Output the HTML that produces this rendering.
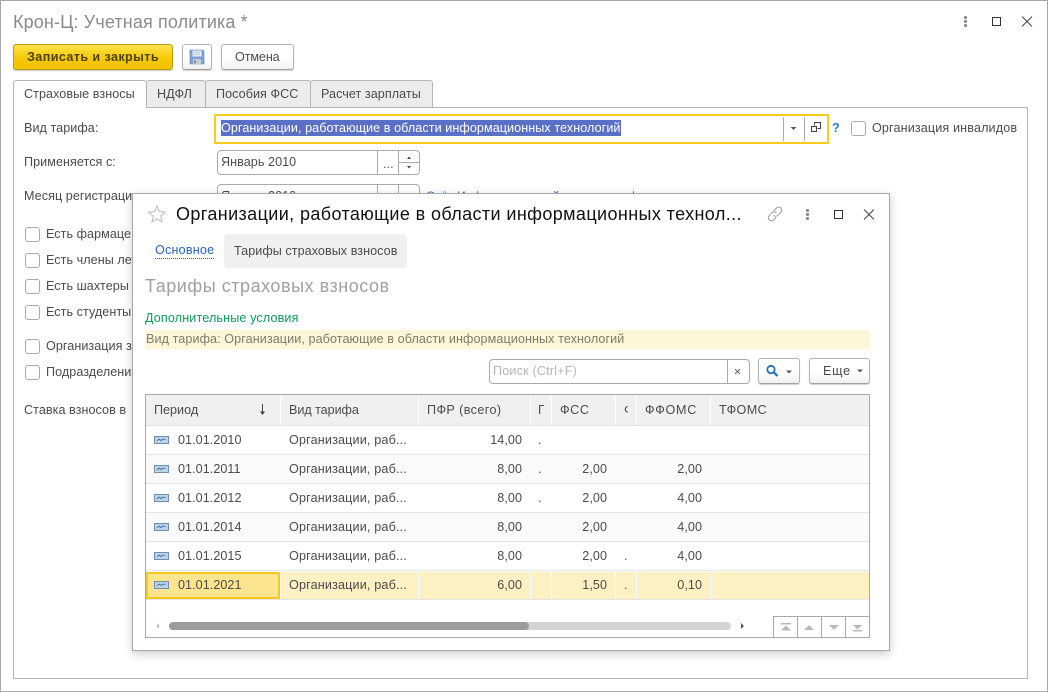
<!DOCTYPE html>
<html lang="ru"><head><meta charset="utf-8"><title>Крон-Ц: Учетная политика</title>
<style>
html,body{margin:0;padding:0;background:#fff}
#p{position:relative;width:1048px;height:692px;overflow:hidden;background:#fff;font:12.6px/16px "Liberation Sans",Arial,sans-serif;color:#4b4b4b}
#p div,#p span.t,#p svg{position:absolute;box-sizing:border-box}
.t{white-space:nowrap;letter-spacing:.05px}
.t.o{letter-spacing:.16px}
.cb{width:15px;height:15px;border:1px solid #a9a9a9;border-radius:3px;background:#fff}
.tab{top:80px;height:27px;background:#ececec;border:1px solid #b5b5b5;border-bottom:none;border-radius:3px 3px 0 0}
.btn{border:1px solid #b4b4b4;border-bottom-color:#a0a0a0;border-radius:3px;background:linear-gradient(#fff 55%,#f0f0f0);box-shadow:0 1px 1px #d0d0d0}
.h{top:395px;height:30px;background:#f0f0f0}
.sep{left:146px;width:723px;height:1px;background:#e4e4e4}
.r{text-align:right}
</style></head><body><div id="p">
<div style="left:0;top:0;width:1048px;height:692px;border:1px solid #a8a8a8"></div>
<span class="t" style="left:13px;top:11px;font-size:18px;line-height:22px;color:#8a8a8a;letter-spacing:.13px">Крон-Ц: Учетная политика *</span>
<svg style="left:960px;top:14px" width="74" height="16" viewBox="0 0 74 16"><g fill="#8a8a8a"><rect x="4" y="2" width="3" height="3" rx="1"/><rect x="4" y="6" width="3" height="3" rx="1"/><rect x="4" y="10" width="3" height="3" rx="1"/></g><rect x="32.500" y="3.500" width="8" height="8" fill="none" stroke="#333"/><path d="M62 2.500l10 10M72 2.500l-10 10" stroke="#444" fill="none"/></svg>

<div style="left:13px;top:44px;width:160px;height:26px;border:1px solid #b99c10;border-radius:3px;background:linear-gradient(#fde24a,#f6c800 60%,#f2c200);box-shadow:0 1px 1px #ccc"></div>
<span class="t" style="left:27px;top:49px;font-weight:bold;color:#4d4300;letter-spacing:.4px">Записать и закрыть</span>
<div class="btn" style="left:182px;top:44px;width:30px;height:26px"></div>
<svg style="left:189px;top:49px" width="16" height="16" viewBox="0 0 16 16"><path d="M1 1h12.500l1.500 1.500V15H1z" fill="#7aa3d6" stroke="#5f86b8" stroke-width=".6"/><rect x="3.500" y="1.500" width="9" height="6" fill="#e6eef8"/><path d="M5 3.500h6M5 5.500h6" stroke="#a9bdd3" stroke-width=".8"/><rect x="4" y="10" width="8" height="5" fill="#c9ced4"/><rect x="5" y="11" width="2" height="3.500" fill="#8a93a0"/></svg>
<div class="btn" style="left:221px;top:44px;width:73px;height:26px"></div>
<span class="t" style="left:235px;top:49px;letter-spacing:-.1px">Отмена</span>

<div style="left:13px;top:107px;width:1015px;height:572px;border:1px solid #b5b5b5"></div>
<div class="tab" style="left:13px;width:134px;height:28px;background:#fff;z-index:1"></div>
<span class="t" style="left:24px;top:86px;z-index:2">Страховые взносы</span>
<div class="tab" style="left:146px;width:60px"></div><span class="t" style="left:157px;top:86px">НДФЛ</span>
<div class="tab" style="left:205px;width:106px"></div><span class="t" style="left:216px;top:86px">Пособия ФСС</span>
<div class="tab" style="left:310px;width:123px"></div><span class="t" style="left:321px;top:86px">Расчет зарплаты</span>

<span class="t" style="left:24px;top:120px">Вид тарифа:</span>
<div style="left:214px;top:114px;width:615px;height:30px;border:2px solid #f9cc1e;background:#fff"></div>
<div style="left:221px;top:120px;width:400px;height:16px;background:#5a6fc6"></div>
<span class="t" style="left:221px;top:120px;color:#fff;letter-spacing:.07px">Организации, работающие в области информационных технологий</span>
<div style="left:783px;top:117px;width:1px;height:24px;background:#aaa"></div>
<div style="left:804px;top:117px;width:1px;height:24px;background:#aaa"></div>
<svg style="left:789px;top:124px" width="10" height="10"><path d="M1.500 3h6L4.500 6z" fill="#555"/></svg>
<svg style="left:810px;top:122px" width="12" height="12" viewBox="0 0 12 12" fill="none" stroke="#444"><path d="M4.500 3.500v-3h6v6h-3"/><rect x="1.500" y="4.500" width="5" height="5"/></svg>
<span class="t" style="left:832px;top:120px;color:#1f7fc4;font-weight:bold">?</span>
<div class="cb" style="left:851px;top:121px"></div>
<span class="t" style="left:872px;top:120px;letter-spacing:.13px">Организация инвалидов</span>

<span class="t" style="left:24px;top:154px">Применяется с:</span>
<div style="left:217px;top:150px;width:203px;height:25px;border:1px solid #aaa;border-radius:4px"></div>
<div style="left:377px;top:151px;width:1px;height:23px;background:#aaa"></div>
<div style="left:398px;top:151px;width:1px;height:23px;background:#aaa"></div>
<div style="left:399px;top:162px;width:20px;height:1px;background:#aaa"></div>
<span class="t" style="left:221px;top:154px">Январь 2010</span>
<span class="t" style="left:383px;top:156px;color:#555">...</span>
<svg style="left:404px;top:153px" width="10" height="20"><path d="M3 6h4L5 3.500zM3 13h4l-2 2.500z" fill="#444"/></svg>

<span class="t" style="left:24px;top:188px">Месяц регистрации</span>
<div style="left:217px;top:184px;width:203px;height:25px;border:1px solid #aaa;border-radius:4px"></div>
<div style="left:377px;top:185px;width:1px;height:23px;background:#aaa"></div>
<div style="left:398px;top:185px;width:1px;height:23px;background:#aaa"></div>
<span class="t" style="left:221px;top:188px">Январь 2010</span>
<span class="t" style="left:426px;top:188px;color:#1f6fc0;font-size:12px;letter-spacing:.17px">Счёт Информационной поддержки ф</span>

<div class="cb" style="left:25px;top:227px"></div><span class="t" style="left:46px;top:226px">Есть фармацевты</span>
<div class="cb" style="left:25px;top:253px"></div><span class="t" style="left:46px;top:252px">Есть члены летных</span>
<div class="cb" style="left:25px;top:279px"></div><span class="t" style="left:46px;top:278px">Есть шахтеры</span>
<div class="cb" style="left:25px;top:305px"></div><span class="t" style="left:46px;top:304px">Есть студенты</span>
<div class="cb" style="left:25px;top:339px"></div><span class="t" style="left:46px;top:338px">Организация заявлена</span>
<div class="cb" style="left:25px;top:365px"></div><span class="t" style="left:46px;top:364px">Подразделения</span>
<span class="t" style="left:24px;top:402px">Ставка взносов в</span>

<!-- dialog -->
<div style="left:132px;top:193px;width:758px;height:458px;background:#fff;border:1px solid #a8a8a8;box-shadow:0 3px 9px rgba(0,0,0,.2)"></div>
<svg style="left:147px;top:204px" width="20" height="20" viewBox="0 0 20 20"><path d="M10 2l2.300 5.600 6 .5-4.600 3.900 1.400 5.900L10 14.800 4.900 17.900l1.400-5.900L1.700 8.100l6-.5z" fill="#fff" stroke="#bbb"/></svg>
<span class="t" style="left:176px;top:203px;font-size:18px;line-height:22px;color:#111;letter-spacing:.39px">Организации, работающие в области информационных технол...</span>
<svg style="left:766px;top:205px" width="18" height="18" viewBox="0 0 18 18" fill="none" stroke="#999" stroke-width="1"><path d="M8 5.500l2.500-2.500a3 3 0 0 1 4.300 4.300l-3 3a3 3 0 0 1-4.300 0"/><path d="M10 12.500l-2.500 2.500a3 3 0 0 1-4.300-4.300l3-3a3 3 0 0 1 4.300 0"/></svg>
<svg style="left:800px;top:206px" width="90" height="16" viewBox="0 0 90 16"><g fill="#8a8a8a"><rect x="6" y="3" width="3" height="3" rx="1"/><rect x="6" y="7" width="3" height="3" rx="1"/><rect x="6" y="11" width="3" height="3" rx="1"/></g><rect x="34.500" y="4.500" width="8" height="8" fill="none" stroke="#333"/><path d="M64 3.500l10 10M74 3.500l-10 10" stroke="#444" fill="none"/></svg>
<span class="t" style="left:155px;top:243px;color:#2463b8;border-bottom:1px dotted #2463b8;line-height:15px;letter-spacing:.2px">Основное</span>
<div style="left:224px;top:234px;width:183px;height:34px;background:#f0f0f0;border-radius:4px"></div>
<span class="t" style="left:234px;top:243px">Тарифы страховых взносов</span>
<span class="t" style="left:145px;top:275px;font-size:18px;line-height:22px;color:#a0a0a0;letter-spacing:.53px">Тарифы страховых взносов</span>
<span class="t" style="left:145px;top:310px;color:#0d9a5c;letter-spacing:.13px">Дополнительные условия</span>
<div style="left:145px;top:330px;width:725px;height:19px;background:#fdf7d8"></div>
<span class="t" style="left:146px;top:331px;color:#7c7c6e;letter-spacing:.08px">Вид тарифа: Организации, работающие в области информационных технологий</span>

<div style="left:489px;top:359px;width:261px;height:25px;border:1px solid #aaa;border-radius:4px"></div>
<div style="left:727px;top:360px;width:1px;height:23px;background:#aaa"></div>
<span class="t" style="left:493px;top:363px;color:#b5b5b5;letter-spacing:.18px">Поиск (Ctrl+F)</span>
<svg style="left:733px;top:367px" width="10" height="10"><path d="M2 2l5 5M7 2l-5 5" stroke="#666"/></svg>
<div class="btn" style="left:758px;top:358px;width:42px;height:26px"></div>
<svg style="left:765px;top:364px" width="30" height="14" viewBox="0 0 30 14" fill="none"><circle cx="6" cy="5.500" r="3.700" stroke="#1d72b8" stroke-width="1.800"/><path d="M9 8.500l3.500 3.500" stroke="#1d72b8" stroke-width="2.200"/><path d="M21 6.500h6L24 9.500z" fill="#555"/></svg>
<div class="btn" style="left:809px;top:358px;width:61px;height:26px"></div>
<span class="t" style="left:823px;top:363px;letter-spacing:.75px">Еще</span>
<svg style="left:856px;top:368px" width="10" height="8"><path d="M1 1.500h6L4 4.500z" fill="#555"/></svg>

<!-- grid -->
<div style="left:145px;top:394px;width:725px;height:244px;border:1px solid #a8a8a8"></div>
<div class="h" style="left:146px;width:134px"></div>
<div class="h" style="left:281px;width:137px"></div>
<div class="h" style="left:419px;width:111px"></div>
<div class="h" style="left:531px;width:20px"></div>
<div class="h" style="left:552px;width:63px"></div>
<div class="h" style="left:616px;width:20px"></div>
<div class="h" style="left:637px;width:73px"></div>
<div class="h" style="left:711px;width:158px"></div>
<span class="t" style="left:154px;top:402px;letter-spacing:0">Период</span>
<svg style="left:257px;top:403px" width="12" height="14"><path d="M5.500 1v10" stroke="#444"/><path d="M3 8.500h5L5.500 12z" fill="#444"/></svg>
<span class="t" style="left:289px;top:402px;letter-spacing:-.05px">Вид тарифа</span>
<span class="t" style="left:427px;top:402px;letter-spacing:.4px">ПФР (всего)</span>
<span class="t" style="left:538px;top:402px;width:6px;overflow:hidden">ПФР</span>
<span class="t" style="left:560px;top:402px;letter-spacing:.6px">ФСС</span>
<span class="t" style="left:624px;top:402px;width:4px;overflow:hidden">ФСС</span>
<span class="t" style="left:645px;top:402px;letter-spacing:.7px">ФФОМС</span>
<span class="t" style="left:719px;top:402px;letter-spacing:.35px">ТФОМС</span>

<div style="left:146px;top:455px;width:723px;height:29px;background:#fafafa"></div>
<div style="left:146px;top:513px;width:723px;height:29px;background:#fafafa"></div>
<div class="sep" style="top:425px"></div><div class="sep" style="top:454px"></div><div class="sep" style="top:483px"></div><div class="sep" style="top:512px"></div><div class="sep" style="top:541px"></div><div class="sep" style="top:570px"></div><div class="sep" style="top:599px"></div>

<div style="left:146px;top:572px;width:723px;height:27px;background:#fdf1c3"></div>
<div style="left:146px;top:572px;width:134px;height:27px;background:#fde48e;border:2px solid #f9c71e"></div>
<div style="left:280px;top:571px;width:1px;height:28px;background:#fff"></div>
<div style="left:418px;top:571px;width:1px;height:28px;background:#fff"></div>
<div style="left:530px;top:571px;width:1px;height:28px;background:#fff"></div>
<div style="left:551px;top:571px;width:1px;height:28px;background:#fff"></div>
<div style="left:615px;top:571px;width:1px;height:28px;background:#fff"></div>
<div style="left:636px;top:571px;width:1px;height:28px;background:#fff"></div>
<div style="left:710px;top:571px;width:1px;height:28px;background:#fff"></div>

<svg style="left:154px;top:435px" width="16" height="10"><rect x=".5" y="1.500" width="14" height="7" fill="#b9d3ea" stroke="#6f8fb0"/><path d="M3 6l2-2 2 1.500 2-1.500 2.500.5" fill="none" stroke="#2d5f95" stroke-width=".8"/></svg>
<svg style="left:154px;top:464px" width="16" height="10"><rect x=".5" y="1.500" width="14" height="7" fill="#b9d3ea" stroke="#6f8fb0"/><path d="M3 6l2-2 2 1.500 2-1.500 2.500.5" fill="none" stroke="#2d5f95" stroke-width=".8"/></svg>
<svg style="left:154px;top:493px" width="16" height="10"><rect x=".5" y="1.500" width="14" height="7" fill="#b9d3ea" stroke="#6f8fb0"/><path d="M3 6l2-2 2 1.500 2-1.500 2.500.5" fill="none" stroke="#2d5f95" stroke-width=".8"/></svg>
<svg style="left:154px;top:522px" width="16" height="10"><rect x=".5" y="1.500" width="14" height="7" fill="#b9d3ea" stroke="#6f8fb0"/><path d="M3 6l2-2 2 1.500 2-1.500 2.500.5" fill="none" stroke="#2d5f95" stroke-width=".8"/></svg>
<svg style="left:154px;top:551px" width="16" height="10"><rect x=".5" y="1.500" width="14" height="7" fill="#b9d3ea" stroke="#6f8fb0"/><path d="M3 6l2-2 2 1.500 2-1.500 2.500.5" fill="none" stroke="#2d5f95" stroke-width=".8"/></svg>
<svg style="left:154px;top:580px" width="16" height="10"><rect x=".5" y="1.500" width="14" height="7" fill="#b9d3ea" stroke="#6f8fb0"/><path d="M3 6l2-2 2 1.500 2-1.500 2.500.5" fill="none" stroke="#2d5f95" stroke-width=".8"/></svg>

<span class="t" style="left:178px;top:432px">01.01.2010</span><span class="t o" style="left:289px;top:432px">Организации, раб...</span><span class="t r" style="right:526px;top:432px">14,00</span><span class="t" style="left:538px;top:432px">.</span>
<span class="t" style="left:178px;top:461px">01.01.2011</span><span class="t o" style="left:289px;top:461px">Организации, раб...</span><span class="t r" style="right:526px;top:461px">8,00</span><span class="t" style="left:538px;top:461px">.</span><span class="t r" style="right:441px;top:461px">2,00</span><span class="t r" style="right:346px;top:461px">2,00</span>
<span class="t" style="left:178px;top:490px">01.01.2012</span><span class="t o" style="left:289px;top:490px">Организации, раб...</span><span class="t r" style="right:526px;top:490px">8,00</span><span class="t" style="left:538px;top:490px">.</span><span class="t r" style="right:441px;top:490px">2,00</span><span class="t r" style="right:346px;top:490px">4,00</span>
<span class="t" style="left:178px;top:519px">01.01.2014</span><span class="t o" style="left:289px;top:519px">Организации, раб...</span><span class="t r" style="right:526px;top:519px">8,00</span><span class="t r" style="right:441px;top:519px">2,00</span><span class="t r" style="right:346px;top:519px">4,00</span>
<span class="t" style="left:178px;top:548px">01.01.2015</span><span class="t o" style="left:289px;top:548px">Организации, раб...</span><span class="t r" style="right:526px;top:548px">8,00</span><span class="t r" style="right:441px;top:548px">2,00</span><span class="t" style="left:624px;top:548px">.</span><span class="t r" style="right:346px;top:548px">4,00</span>
<span class="t" style="left:178px;top:577px">01.01.2021</span><span class="t o" style="left:289px;top:577px">Организации, раб...</span><span class="t r" style="right:526px;top:577px">6,00</span><span class="t r" style="right:441px;top:577px">1,50</span><span class="t" style="left:624px;top:577px">.</span><span class="t r" style="right:346px;top:577px">0,10</span>

<svg style="left:154px;top:622px" width="8" height="8"><path d="M5 1v6L2 4z" fill="#c4c4c4"/></svg>
<div style="left:169px;top:622px;width:562px;height:8px;border-radius:4px;background:#d4d4d4"></div>
<div style="left:169px;top:622px;width:360px;height:8px;border-radius:4px;background:#9c9c9c"></div>
<svg style="left:739px;top:622px" width="8" height="8"><path d="M2 1v6l3-3z" fill="#555"/></svg>

<div style="left:773px;top:616px;width:97px;height:22px;border:1px solid #a8a8a8;background:#fff"></div>
<div style="left:797px;top:617px;width:1px;height:20px;background:#a8a8a8"></div>
<div style="left:821px;top:617px;width:1px;height:20px;background:#a8a8a8"></div>
<div style="left:845px;top:617px;width:1px;height:20px;background:#a8a8a8"></div>
<svg style="left:774px;top:617px" width="95" height="20" viewBox="0 0 95 20" fill="#b8b8b8"><path d="M7 6h10v1.500H7zM7 13.500l5-5 5 5z"/><path d="M30 13l5-5 5 5z"/><path d="M55 8h10l-5 5z"/><path d="M79 8h9l-4.500 4.500zM79 13h9v1.500h-9z"/></svg>
</div></body></html>
